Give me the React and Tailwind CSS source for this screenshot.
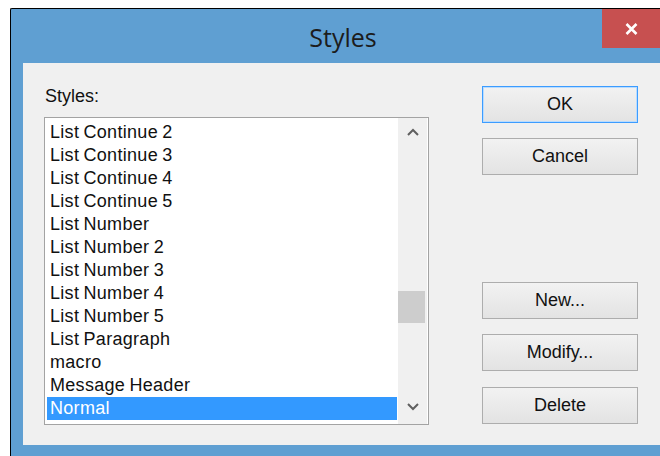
const styles = [
  "List Continue 2",
  "List Continue 3",
  "List Continue 4",
  "List Continue 5",
  "List Number",
  "List Number 2",
  "List Number 3",
  "List Number 4",
  "List Number 5",
  "List Paragraph",
  "macro",
  "Message Header",
  "Normal",
];

function Button({ children, primary, className = "" }) {
  return (
    <button
      className={`h-[37px] w-[156px] bg-gradient-to-b from-[#f2f2f2] to-[#e3e3e3] text-[18px] text-[#111] ${
        primary ? "border border-[#3c9cff] shadow-[inset_0_0_0_1px_#b9dcff]" : "border border-[#adadad]"
      } ${className}`}
    >
      {children}
    </button>
  );
}

function Chevron({ up }) {
  return (
    <svg width="12" height="8" viewBox="0 0 12 8">
      <path
        d={up ? "M1 7 L6 2 L11 7" : "M1 1 L6 6 L11 1"}
        fill="none"
        stroke="#606060"
        strokeWidth="2"
      />
    </svg>
  );
}

export default function App() {
  return (
    <div className="w-[660px] h-[456px] overflow-hidden bg-white pt-[8px] pl-[10px] font-['Liberation_Sans',Arial,sans-serif]">
      <div className="w-[650px] h-[448px] border-l border-t border-black bg-[#5f9fd2] rounded-tl-[2px] flex flex-col">
        {/* title bar */}
        <div className="h-[54px] flex items-start shrink-0">
          <div className="flex-1 pl-[73px] pt-[13px] text-center text-[25px] leading-[30px] text-[#1c1c1c] font-['Open_Sans','Noto_Sans',sans-serif]">
            Styles
          </div>
          <div className="w-[58px] h-[39px] bg-[#c75050] flex items-center justify-center">
            <svg width="13" height="12" viewBox="0 0 13 12">
              <path d="M1.5 1 L11.5 11 M11.5 1 L1.5 11" stroke="#fff" strokeWidth="2.6" />
            </svg>
          </div>
        </div>

        {/* client area */}
        <div className="ml-[12px] w-[637px] h-[382px] bg-[#f0f0f0] flex shrink-0">
          <div className="pl-[21px] pt-[23px]">
            <div className="text-[18px] leading-[21px] text-[#111] pl-[1px]">Styles:</div>
            <div className="mt-[10px] w-[385px] h-[308px] border border-[#a3a3a3] bg-white flex">
              <ul className="flex-1 pl-[2px] pr-[1px] pt-[3px] text-[18px] leading-[23px] text-[#111] tracking-[0.3px] [word-spacing:-1px]">
                {styles.map((s) => (
                  <li
                    key={s}
                    className={`pl-[3px] h-[23px] ${s === "Normal" ? "bg-[#3399ff] text-white" : ""}`}
                  >
                    {s}
                  </li>
                ))}
              </ul>
              <div className="w-[29px] mr-[1px] bg-[#f0f0f0] flex flex-col items-center">
                <div className="h-[30px] pt-[10px]">
                  <Chevron up />
                </div>
                <div className="flex-1 w-full pr-[2px] pt-[143px]">
                  <div className="h-[32px] bg-[#cdcdcd]" />
                </div>
                <div className="h-[30px] pt-[9px]">
                  <Chevron />
                </div>
              </div>
            </div>
          </div>

          <div className="ml-[53px] pt-[23px] flex flex-col">
            <Button primary>OK</Button>
            <Button className="mt-[15px]">Cancel</Button>
            <Button className="mt-[107px]">New...</Button>
            <Button className="mt-[15px]">Modify...</Button>
            <Button className="mt-[16px]">Delete</Button>
          </div>
        </div>
      </div>
    </div>
  );
}
